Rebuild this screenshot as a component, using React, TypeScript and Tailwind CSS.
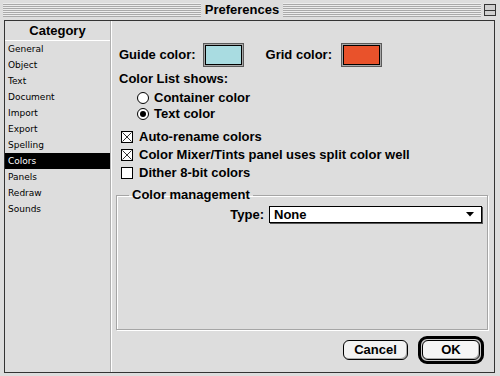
import React from "react";

const categories = [
  "General",
  "Object",
  "Text",
  "Document",
  "Import",
  "Export",
  "Spelling",
  "Colors",
  "Panels",
  "Redraw",
  "Sounds",
];

function Stripes() {
  return (
    <div className="flex-1 h-[14px] bg-[repeating-linear-gradient(to_bottom,#ececec_0px,#ececec_1px,#a9a9a9_1px,#a9a9a9_2px)]" />
  );
}

function Swatch({ color }: { color: string }) {
  return (
    <div className="w-[41px] h-[24px] border border-[#5a5a5a] bg-[#a8a8a8] p-[1px]">
      <div className="w-full h-full border border-black" style={{ backgroundColor: color }} />
    </div>
  );
}

function Radio({ label, checked }: { label: string; checked?: boolean }) {
  return (
    <div className="h-[16px] flex items-center ml-[18px] gap-[5px]">
      <div className="w-[12px] h-[12px] rounded-full border border-black bg-white flex items-center justify-center">
        {checked && <div className="w-[6px] h-[6px] rounded-full bg-black" />}
      </div>
      <span>{label}</span>
    </div>
  );
}

function Check({ label, checked }: { label: string; checked?: boolean }) {
  return (
    <div className="h-[18px] flex items-center ml-[2px] gap-[6px]">
      <div className="w-[12px] h-[12px] border border-black bg-white">
        {checked && (
          <svg width="10" height="10" viewBox="0 0 10 10" className="block">
            <path d="M0.5 0.5 L9.5 9.5 M9.5 0.5 L0.5 9.5" stroke="#333" strokeWidth="1" />
          </svg>
        )}
      </div>
      <span>{label}</span>
    </div>
  );
}

export default function App() {
  return (
    <div className="w-[500px] h-[376px] overflow-hidden bg-[#dddddd] flex flex-col font-['Liberation_Sans',Arial,sans-serif] text-[13px] font-bold text-black leading-[16px]">
      {/* title bar */}
      <div className="h-[20px] flex items-center pl-[3px] pr-[4px]">
        <Stripes />
        <span className="px-[4px] text-[13px] font-bold">Preferences</span>
        <Stripes />
        <div className="ml-[3px] w-[12px] h-[12px] border border-[#333] bg-[#cfcfcf] flex flex-col justify-center">
          <div className="h-[1px] bg-[#333]" />
        </div>
      </div>

      <div className="flex-1 flex ml-[4px] mr-[5px] mb-[3px] border border-[#333]">
        {/* category list */}
        <div className="w-[106px] border-r border-[#b0b0b0] flex flex-col">
          <div className="h-[20px] flex items-center justify-center border-b border-white">Category</div>
          <ul className="flex flex-col font-['DejaVu_Sans',Verdana,sans-serif] font-normal text-[9px]">
            {categories.map((c) => (
              <li
                key={c}
                className={
                  c === "Colors"
                    ? "h-[16px] leading-[16px] pl-[3px] bg-black text-white"
                    : "h-[16px] leading-[16px] pl-[3px]"
                }
              >
                {c}
              </li>
            ))}
          </ul>
        </div>

        {/* settings */}
        <div className="flex-1 border-l border-white flex flex-col pl-[7px] pr-[6px] pt-[22px]">
          <div className="flex items-center">
            <span>Guide color:</span>
            <div className="ml-[7px]">
              <Swatch color="#a9dce1" />
            </div>
            <span className="ml-[22px]">Grid color:</span>
            <div className="ml-[9px]">
              <Swatch color="#e9522b" />
            </div>
          </div>

          <div className="mt-[4px] h-[16px]">Color List shows:</div>
          <div className="mt-[3px]">
            <Radio label="Container color" />
            <Radio label="Text color" checked />
          </div>

          <div className="mt-[6px]">
            <Check label="Auto-rename colors" checked />
            <Check label="Color Mixer/Tints panel uses split color well" checked />
            <Check label="Dither 8-bit colors" />
          </div>

          <fieldset className="mt-[5px] -ml-[3px] h-[143px] border border-[#a5a5a5] shadow-[inset_1px_1px_0_#fff,1px_1px_0_#fff]">
            <legend className="ml-[12px] px-[3px]">Color management</legend>
            <div className="mt-[3px] flex items-center justify-end pr-[5px] gap-[5px]">
              <span>Type:</span>
              <div className="w-[213px] h-[17px] bg-white border border-black shadow-[1px_1px_0_#555] flex items-center justify-between pl-[4px] pr-[7px]">
                <span>None</span>
                <svg width="8" height="5" viewBox="0 0 8 5">
                  <path d="M0 0 H8 L4 4.5 Z" fill="#000" />
                </svg>
              </div>
            </div>
          </fieldset>

          <div className="mt-[6px] flex items-center justify-end gap-[10px] pr-[4px]">
            <button className="w-[65px] h-[20px] rounded-[6px] border border-black bg-[#f2f2f2] shadow-[inset_-1px_-1px_0_#aaa]">
              Cancel
            </button>
            <div className="w-[66px] h-[28px] rounded-[9px] border-[3px] border-black p-[1px] bg-[#c9c9c9]">
              <button className="w-full h-full rounded-[6px] border border-black bg-[#f5f5f5] shadow-[inset_-1px_-1px_0_#aaa]">
                OK
              </button>
            </div>
          </div>
        </div>
      </div>
    </div>
  );
}
